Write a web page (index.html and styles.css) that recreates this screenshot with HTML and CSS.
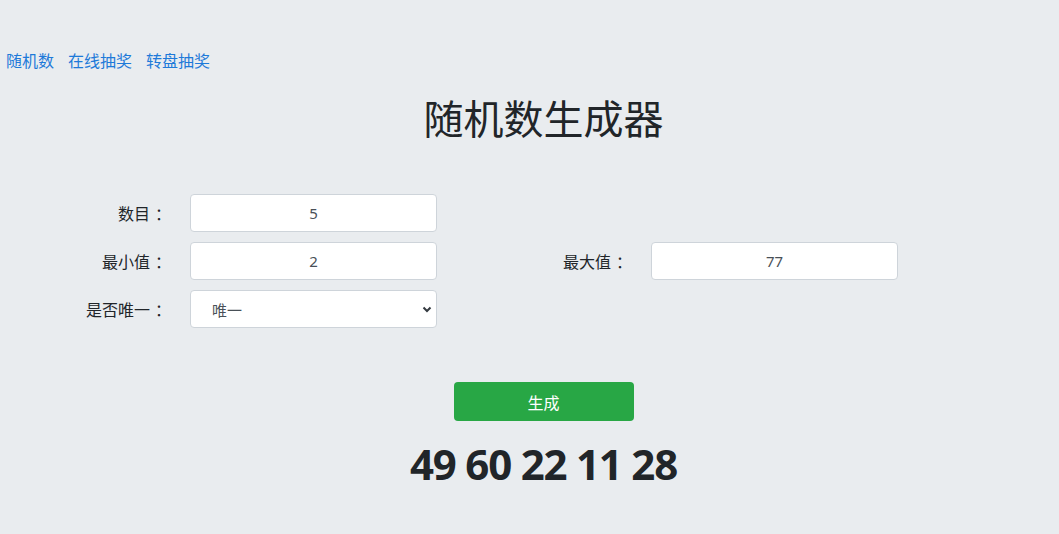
FILE: index.html
```html
<!DOCTYPE html>
<html lang="zh">
<head>
<meta charset="utf-8">
<title>随机数生成器</title>
<link rel="stylesheet" href="styles.css">
</head>
<body>
<nav class="nav">
  <a href="#" class="nav-link">随机数</a>
  <a href="#" class="nav-link">在线抽奖</a>
  <a href="#" class="nav-link">转盘抽奖</a>
</nav>
<main class="main">
  <h1 class="title">随机数生成器</h1>
  <form class="form">
    <label class="label">数目<span class="colon">：</span></label>
    <input class="field" type="text" value="5">
    <span></span><span></span>
    <label class="label">最小值<span class="colon">：</span></label>
    <input class="field" type="text" value="2">
    <label class="label">最大值<span class="colon">：</span></label>
    <input class="field" type="text" value="77">
    <label class="label">是否唯一<span class="colon">：</span></label>
    <div class="select-wrap">
      <select class="field select">
        <option>唯一</option>
        <option>不唯一</option>
      </select>
      <svg class="chevron" width="10" height="8" viewBox="0 0 10 8"><path d="M1.5 2.5 L5 6 L8.5 2.5" fill="none" stroke="#343a40" stroke-width="2"/></svg>
    </div>
  </form>
  <div class="actions">
    <button class="btn" type="button">生成</button>
  </div>
  <div class="result">49 60 22 11 28</div>
</main>
</body>
</html>
```
FILE: styles.css
```css
html, body {
  margin: 0;
  padding: 0;
  background: #e9ecef;
}
body {
  font-family: "Noto Sans CJK SC", "Noto Sans", sans-serif;
  color: #212529;
  font-size: 16px;
}
.nav {
  display: flex;
  gap: 14px;
  padding: 49px 0 0 6px;
  line-height: 22px;
}
.nav-link {
  color: #1e7ad9;
  text-decoration: none;
  font-size: 16px;
}
.main {
  padding-left: 28px;
}
.title {
  margin: 18px 0 0;
  text-align: center;
  font-size: 40px;
  font-weight: 400;
  line-height: 56px;
  color: #212529;
}
.form {
  margin: 49px 0 0 -28px;
  display: grid;
  grid-template-columns: 166px 247px 166px 247px;
  column-gap: 24px;
  row-gap: 10px;
  grid-auto-rows: 38px;
}
.label {
  text-align: right;
  line-height: 38px;
  font-size: 16px;
  color: #212529;
}
.colon {
  display: inline-block;
  margin-left: 5px;
  margin-right: -5px;
}
.field {
  box-sizing: border-box;
  width: 100%;
  height: 38px;
  border: 1px solid #ced4da;
  border-radius: 4px;
  background: #fff;
  text-align: center;
  font-family: "Noto Sans", "Noto Sans CJK SC", sans-serif;
  font-size: 15px;
  color: #495057;
  padding: 0 12px;
  margin: 0;
  outline: none;
}
.select-wrap {
  position: relative;
}
.select {
  appearance: none;
  -webkit-appearance: none;
  text-align: left;
  padding-left: 21px;
  font-family: "Noto Sans CJK SC", sans-serif;
}
.chevron {
  position: absolute;
  right: 5px;
  top: 15px;
  pointer-events: none;
}
.actions {
  display: flex;
  justify-content: center;
  margin-top: 54px;
}
.btn {
  width: 180px;
  height: 39px;
  border: none;
  border-radius: 4px;
  background: #28a745;
  color: #fff;
  font-family: "Noto Sans CJK SC", sans-serif;
  font-size: 16px;
  cursor: pointer;
}
.result {
  text-align: center;
  margin-top: 18px;
  font-family: "Open Sans", "Noto Sans", sans-serif;
  font-weight: 700;
  font-size: 42px;
  line-height: 50px;
  letter-spacing: -1.2px;
  color: #212529;
}
```
